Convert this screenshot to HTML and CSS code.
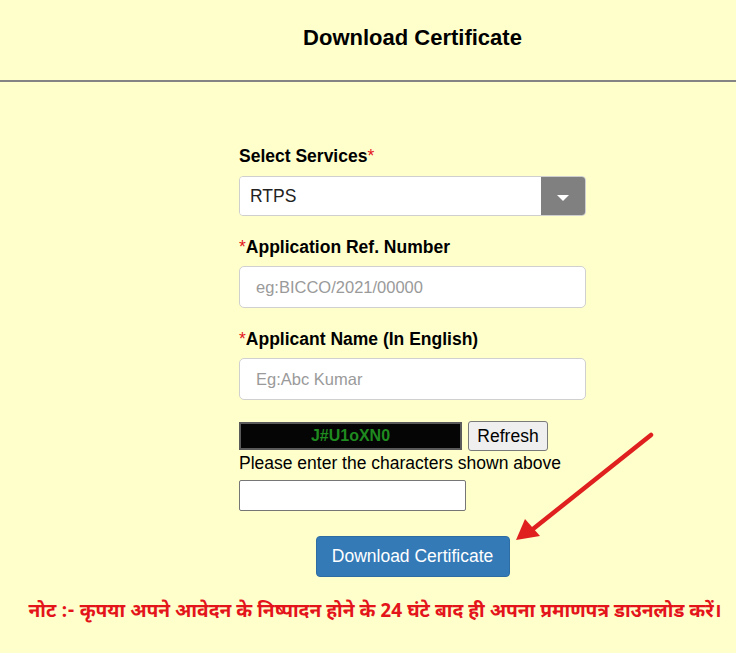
FILE: index.html
```html
<!DOCTYPE html>
<html lang="en">
<head>
<meta charset="utf-8">
<title>Download Certificate</title>
<link rel="stylesheet" href="styles.css">
</head>
<body>
<header class="page-header">
  <div class="offset">
    <h2 class="title">Download Certificate</h2>
  </div>
</header>
<main class="offset">
  <form class="cert-form">
    <div class="group">
      <label class="lbl">Select Services<span class="req">*</span></label>
      <div class="select-wrap">
        <select class="select">
          <option>RTPS</option>
        </select>
        <span class="caret-box"><span class="caret"></span></span>
      </div>
    </div>
    <div class="group">
      <label class="lbl"><span class="req">*</span>Application Ref. Number</label>
      <input class="input" type="text" placeholder="eg:BICCO/2021/00000">
    </div>
    <div class="group">
      <label class="lbl"><span class="req">*</span>Applicant Name (In English)</label>
      <input class="input" type="text" placeholder="Eg:Abc Kumar">
    </div>
    <div class="captcha-row">
      <div class="captcha">J#U1oXN0</div>
      <button type="button" class="refresh">Refresh</button>
    </div>
    <div class="hint">Please enter the characters shown above</div>
    <input class="captcha-input" type="text">
    <div class="actions">
      <button type="button" class="btn-primary">Download Certificate</button>
    </div>
  </form>
</main>
<p class="note">नोट :- कृपया अपने आवेदन के निष्पादन होने के 24 घंटे बाद ही अपना प्रमाणपत्र डाउनलोड करें।</p>
<svg class="arrow" width="160" height="130" viewBox="0 0 160 130" aria-hidden="true">
  <line x1="146" y1="10" x2="28" y2="104" stroke="#e0201f" stroke-width="4.5" stroke-linecap="round"/>
  <polygon points="11,115 20,94 35,111" fill="#e0201f"/>
</svg>
</body>
</html>
```
FILE: styles.css
```css
html, body {
  margin: 0;
  padding: 0;
}
body {
  background: #ffffcc;
  font-family: "Liberation Sans", Arial, sans-serif;
  color: #000;
  position: relative;
  min-height: 653px;
}
.offset {
  padding-left: 89px;
}
.page-header {
  padding: 25px 0 29px;
  border-bottom: 2px solid #848484;
}
.title {
  margin: 0;
  text-align: center;
  font-size: 22px;
  line-height: 26px;
  font-weight: bold;
}
.cert-form {
  width: 347px;
  margin: 64px auto 0;
}
.group {
  margin-bottom: 21px;
}
.lbl {
  display: block;
  font-size: 17.5px;
  line-height: 20px;
  font-weight: bold;
  margin-bottom: 9px;
}
.group:first-child .lbl {
  margin-bottom: 10px;
}
.req {
  color: #e4141b;
  font-weight: normal;
}
.select-wrap {
  display: flex;
  height: 40px;
  box-sizing: border-box;
  border: 1px solid #cfcfcf;
  border-radius: 4px;
  background: #fff;
  overflow: hidden;
}
.select {
  flex: 1;
  appearance: none;
  -webkit-appearance: none;
  border: 0;
  background: #fff;
  font-family: inherit;
  font-size: 17.5px;
  color: #222;
  padding: 0 10px;
  outline: none;
}
.caret-box {
  width: 44px;
  background: #808080;
  display: flex;
  align-items: center;
  justify-content: center;
}
.caret {
  width: 0;
  height: 0;
  border-left: 6px solid transparent;
  border-right: 6px solid transparent;
  border-top: 6px solid #fff;
  margin-top: 3px;
}
.input {
  display: block;
  width: 100%;
  height: 42px;
  box-sizing: border-box;
  border: 1px solid #d0d0d0;
  border-radius: 5px;
  background: #fff;
  padding: 0 16px;
  font-family: inherit;
  font-size: 16.5px;
  color: #333;
}
.input::placeholder {
  color: #9a9a9a;
}
.captcha-row {
  display: flex;
  align-items: center;
  height: 30px;
}
.captcha {
  width: 223px;
  height: 28px;
  box-sizing: border-box;
  background: #050505;
  border: 2px solid #5a5a5a;
  color: #1f8a1f;
  font-weight: bold;
  font-size: 16px;
  line-height: 24px;
  text-align: center;
}
.refresh {
  margin-left: 6px;
  width: 80px;
  height: 30px;
  box-sizing: border-box;
  background: #efefef;
  border: 1px solid #7a7a7a;
  border-radius: 3px;
  font-family: inherit;
  font-size: 17.5px;
  color: #000;
  padding: 0;
}
.hint {
  font-size: 17.5px;
  line-height: 20px;
  margin-top: 2px;
}
.captcha-input {
  display: block;
  margin-top: 7px;
  width: 227px;
  height: 31px;
  box-sizing: border-box;
  border: 1px solid #767676;
  border-radius: 2px;
  background: #fff;
}
.actions {
  display: flex;
  justify-content: center;
  margin-top: 25px;
}
.btn-primary {
  width: 194px;
  height: 41px;
  box-sizing: border-box;
  background: #337ab7;
  border: 1px solid #2e6da4;
  border-radius: 4px;
  color: #fff;
  font-family: inherit;
  font-size: 17.5px;
  padding: 0;
}
.note {
  margin: 23px 0 0;
  padding-left: 14px;
  text-align: center;
  color: #e4141b;
  font-weight: bold;
  font-size: 19.2px;
  line-height: 26px;
  font-family: "Noto Sans Devanagari", "Lohit Devanagari", "Liberation Sans", sans-serif;
}
.arrow {
  position: absolute;
  left: 505px;
  top: 425px;
}
```
